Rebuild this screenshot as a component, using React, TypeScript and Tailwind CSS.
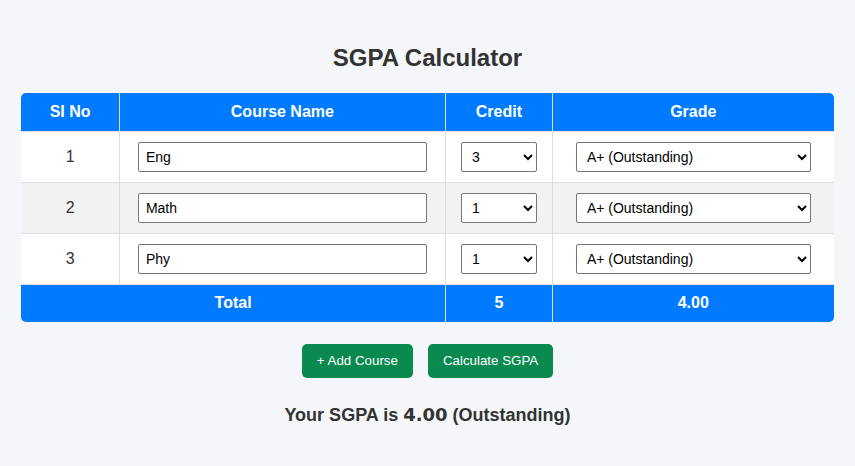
import React, { useState } from 'react';

type Course = { name: string; credit: string; grade: string };

const grades = [
  { label: 'A+ (Outstanding)', value: '10' },
  { label: 'A (Excellent)', value: '9' },
  { label: 'B+ (Very Good)', value: '8' },
  { label: 'B (Good)', value: '7' },
  { label: 'C (Average)', value: '6' },
  { label: 'P (Pass)', value: '5' },
  { label: 'F (Fail)', value: '0' },
];

export default function App() {
  const [courses, setCourses] = useState<Course[]>([
    { name: 'Eng', credit: '3', grade: '10' },
    { name: 'Math', credit: '1', grade: '10' },
    { name: 'Phy', credit: '1', grade: '10' },
  ]);

  const totalCredits = courses.reduce((s, c) => s + Number(c.credit), 0);

  const update = (i: number, key: keyof Course, value: string) => {
    setCourses(courses.map((c, j) => (j === i ? { ...c, [key]: value } : c)));
  };

  const fieldCls =
    'h-[30px] border border-[#767676] rounded-[2px] bg-white text-[14px] text-black';

  return (
    <div className="min-h-screen bg-[#f4f6f9] font-['Liberation_Sans',Arial,sans-serif] text-[#333] pt-[44px]">
      <h2 className="text-center text-[24px] font-bold leading-[28px] text-[#333] mb-[21px]">
        SGPA Calculator
      </h2>

      <div className="w-[95%] mx-auto rounded-[5px] overflow-hidden">
        <table className="w-full table-fixed border-collapse bg-white text-[16px]">
          <colgroup>
            <col className="w-[98px]" />
            <col className="w-[326px]" />
            <col className="w-[107px]" />
            <col />
          </colgroup>
          <thead>
            <tr className="bg-[#007bff] text-white h-[38px]">
              <th className="border border-[#ddd] border-t-0 border-l-0 font-bold">SI No</th>
              <th className="border border-[#ddd] border-t-0 font-bold">Course Name</th>
              <th className="border border-[#ddd] border-t-0 font-bold">Credit</th>
              <th className="border border-[#ddd] border-t-0 border-r-0 font-bold">Grade</th>
            </tr>
          </thead>
          <tbody>
            {courses.map((c, i) => (
              <tr key={i} className={i % 2 === 1 ? 'bg-[#f2f2f2] h-[51px]' : 'bg-white h-[51px]'}>
                <td className="border border-[#ddd] border-l-0 text-center">{i + 1}</td>
                <td className="border border-[#ddd] px-[18px]">
                  <input
                    className={`${fieldCls} w-full px-[7px]`}
                    value={c.name}
                    onChange={(e) => update(i, 'name', e.target.value)}
                  />
                </td>
                <td className="border border-[#ddd] px-[15px]">
                  <select
                    className={`${fieldCls} w-full pl-[6px]`}
                    value={c.credit}
                    onChange={(e) => update(i, 'credit', e.target.value)}
                  >
                    {['1', '2', '3', '4', '5'].map((n) => (
                      <option key={n} value={n}>
                        {n}
                      </option>
                    ))}
                  </select>
                </td>
                <td className="border border-[#ddd] border-r-0 px-[23px]">
                  <select
                    className={`${fieldCls} w-full pl-[6px]`}
                    value={c.grade}
                    onChange={(e) => update(i, 'grade', e.target.value)}
                  >
                    {grades.map((g) => (
                      <option key={g.value} value={g.value}>
                        {g.label}
                      </option>
                    ))}
                  </select>
                </td>
              </tr>
            ))}
            <tr className="bg-[#007bff] text-white font-bold h-[38px]">
              <td colSpan={2} className="border border-[#ddd] border-l-0 border-b-0 text-center">
                Total
              </td>
              <td className="border border-[#ddd] border-b-0 text-center">{totalCredits}</td>
              <td className="border border-[#ddd] border-r-0 border-b-0 text-center">4.00</td>
            </tr>
          </tbody>
        </table>
      </div>

      <div className="flex justify-center gap-[15px] mt-[22px]">
        <button
          className="h-[34px] px-[15px] rounded-[5px] bg-[#0b8a4f] text-white text-[13.33px]"
          onClick={() => setCourses([...courses, { name: '', credit: '1', grade: '10' }])}
        >
          + Add Course
        </button>
        <button className="h-[34px] px-[15px] rounded-[5px] bg-[#0b8a4f] text-white text-[13.33px]">
          Calculate SGPA
        </button>
      </div>

      <p className="text-center text-[18px] font-bold mt-[23px] text-[#333]">
        Your SGPA is <span className="font-['DejaVu_Sans',sans-serif]">4.00</span> (Outstanding)
      </p>
    </div>
  );
}
